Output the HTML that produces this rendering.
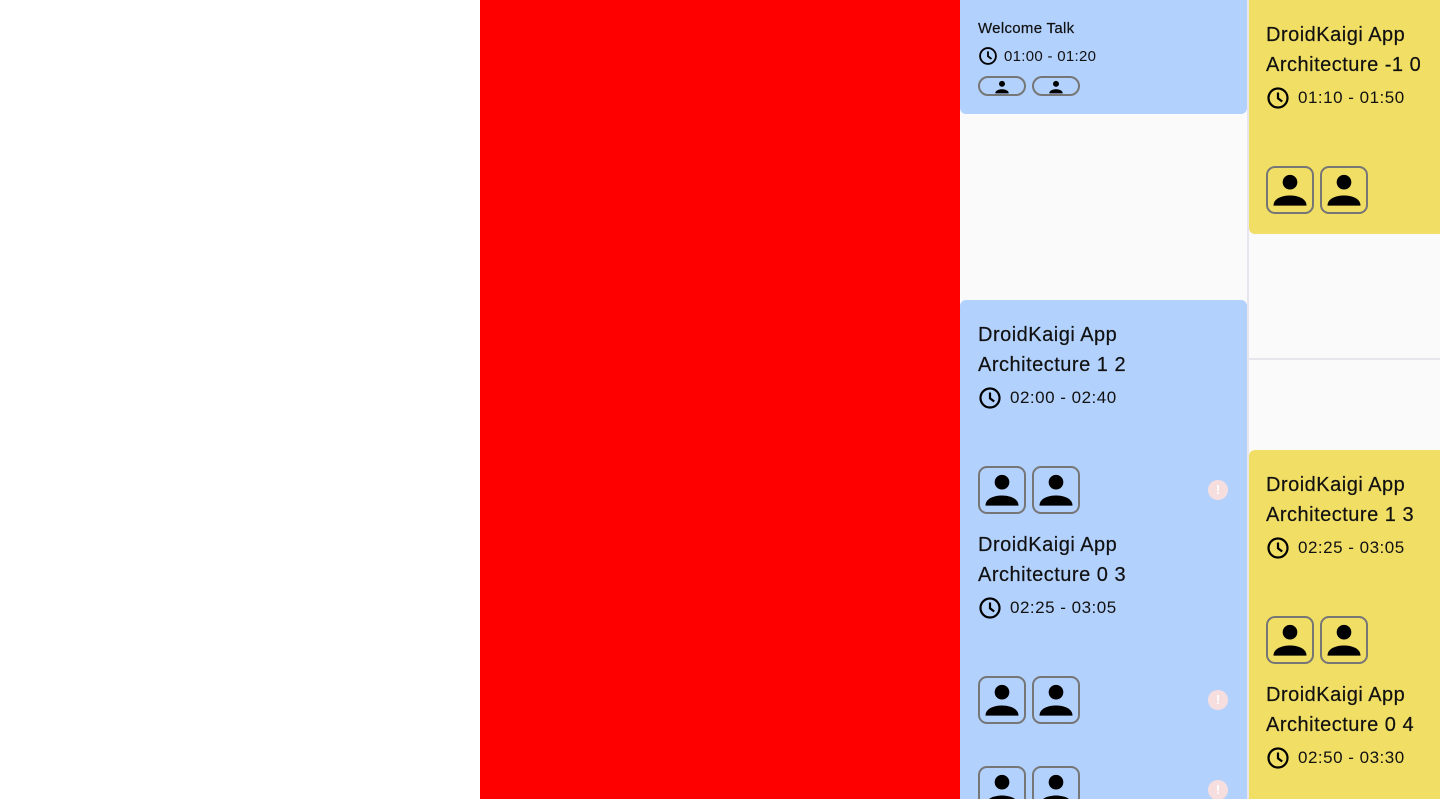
<!DOCTYPE html>
<html><head><meta charset="utf-8"><style>
*{margin:0;padding:0;box-sizing:border-box}
body{width:1440px;height:799px;overflow:hidden;background:#fff;font-family:"Liberation Sans",Roboto,sans-serif;color:#111;position:relative}
.red{position:absolute;left:480px;top:0;width:480px;height:799px;background:#f00}
.grid{position:absolute;left:960px;top:0;width:480px;height:799px;background:#fafafa}
.vline{position:absolute;left:1247px;top:0;width:2px;height:799px;background:#e9e5ee}
.hline{position:absolute;left:1249px;top:358px;width:191px;height:2px;background:#e9e5ee}
.card{position:absolute;overflow:hidden}
.blue{background:#b3d1fd}
.yel{background:#f1de65}
.t{position:absolute;font-size:20px;line-height:30px;letter-spacing:0.5px;-webkit-text-stroke:0.2px #111}
.tm{position:absolute;font-size:17px;letter-spacing:0.5px;display:flex;align-items:center;gap:8px;height:24px}
.av{position:absolute;width:48px;height:48px;border:2px solid #767676;border-radius:9px;overflow:hidden}
.pill{position:absolute;width:48px;height:20px;border:2px solid #767676;border-radius:10px}
.al{position:absolute;width:20px;height:20px;border-radius:50%;background:#f7dede;color:#fff;font-size:13px;font-weight:bold;text-align:center;line-height:20px}
</style></head><body>
<div class="red"></div>
<div class="grid"></div>
<div class="vline"></div>
<div class="hline"></div>

<svg width="0" height="0" style="position:absolute">
<defs>
<symbol id="clk" viewBox="0 0 24 24"><circle cx="12" cy="12" r="9.5" fill="none" stroke="#000" stroke-width="2.2"/><path d="M12 6.5v5.8l4.2 3.2" fill="none" stroke="#000" stroke-width="2.2"/></symbol>
<symbol id="per" viewBox="0 0 48 48"><circle cx="24" cy="15.5" r="8" fill="#000"/><path d="M6 41c0-8 10-11 18-11s18 3 18 11z" fill="#000"/></symbol>
</defs></svg>

<!-- blue card 1 -->
<div class="card blue" style="left:960px;top:0;width:287px;height:114px;border-radius:0 0 6px 6px">
 <div class="t" style="left:18px;top:18px;font-size:15px;line-height:22px;letter-spacing:0.3px">Welcome Talk</div>
 <div class="tm" style="left:18px;top:44px;font-size:15px;gap:6px;letter-spacing:0.3px"><svg width="20" height="20"><use href="#clk"/></svg>01:00 - 01:20</div>
 <div class="pill" style="left:18px;top:76px"><svg width="20" height="18" style="position:absolute;left:12px;top:0px" viewBox="0 0 48 48"><use href="#per"/></svg></div>
 <div class="pill" style="left:72px;top:76px"><svg width="20" height="18" style="position:absolute;left:12px;top:0px" viewBox="0 0 48 48"><use href="#per"/></svg></div>
</div>

<!-- yellow card 1 -->
<div class="card yel" style="left:1249px;top:0;width:191px;height:234px;border-radius:0 0 0 6px">
 <div class="t" style="left:17px;top:20px">DroidKaigi App<br>Architecture -1 0</div>
 <div class="tm" style="left:17px;top:86px"><svg width="24" height="24"><use href="#clk"/></svg>01:10 - 01:50</div>
 <div class="av" style="left:17px;top:166px"><svg width="44" height="44"><use href="#per"/></svg></div>
 <div class="av" style="left:71px;top:166px"><svg width="44" height="44"><use href="#per"/></svg></div>
</div>

<!-- blue card 2 -->
<div class="card blue" style="left:960px;top:300px;width:287px;height:499px;border-radius:6px 6px 0 0">
 <div class="t" style="left:18px;top:20px">DroidKaigi App<br>Architecture 1 2</div>
 <div class="tm" style="left:18px;top:86px"><svg width="24" height="24"><use href="#clk"/></svg>02:00 - 02:40</div>
 <div class="av" style="left:18px;top:166px"><svg width="44" height="44"><use href="#per"/></svg></div>
 <div class="av" style="left:72px;top:166px"><svg width="44" height="44"><use href="#per"/></svg></div>
 <div class="al" style="left:248px;top:180px">!</div>
 <div class="t" style="left:18px;top:230px">DroidKaigi App<br>Architecture 0 3</div>
 <div class="tm" style="left:18px;top:296px"><svg width="24" height="24"><use href="#clk"/></svg>02:25 - 03:05</div>
 <div class="av" style="left:18px;top:376px"><svg width="44" height="44"><use href="#per"/></svg></div>
 <div class="av" style="left:72px;top:376px"><svg width="44" height="44"><use href="#per"/></svg></div>
 <div class="al" style="left:248px;top:390px">!</div>
 <div class="av" style="left:18px;top:466px"><svg width="44" height="44"><use href="#per"/></svg></div>
 <div class="av" style="left:72px;top:466px"><svg width="44" height="44"><use href="#per"/></svg></div>
 <div class="al" style="left:248px;top:480px">!</div>
</div>

<!-- yellow card 2 -->
<div class="card yel" style="left:1249px;top:450px;width:191px;height:349px;border-radius:6px 0 0 0">
 <div class="t" style="left:17px;top:20px">DroidKaigi App<br>Architecture 1 3</div>
 <div class="tm" style="left:17px;top:86px"><svg width="24" height="24"><use href="#clk"/></svg>02:25 - 03:05</div>
 <div class="av" style="left:17px;top:166px"><svg width="44" height="44"><use href="#per"/></svg></div>
 <div class="av" style="left:71px;top:166px"><svg width="44" height="44"><use href="#per"/></svg></div>
 <div class="t" style="left:17px;top:230px">DroidKaigi App<br>Architecture 0 4</div>
 <div class="tm" style="left:17px;top:296px"><svg width="24" height="24"><use href="#clk"/></svg>02:50 - 03:30</div>
</div>
</body></html>
